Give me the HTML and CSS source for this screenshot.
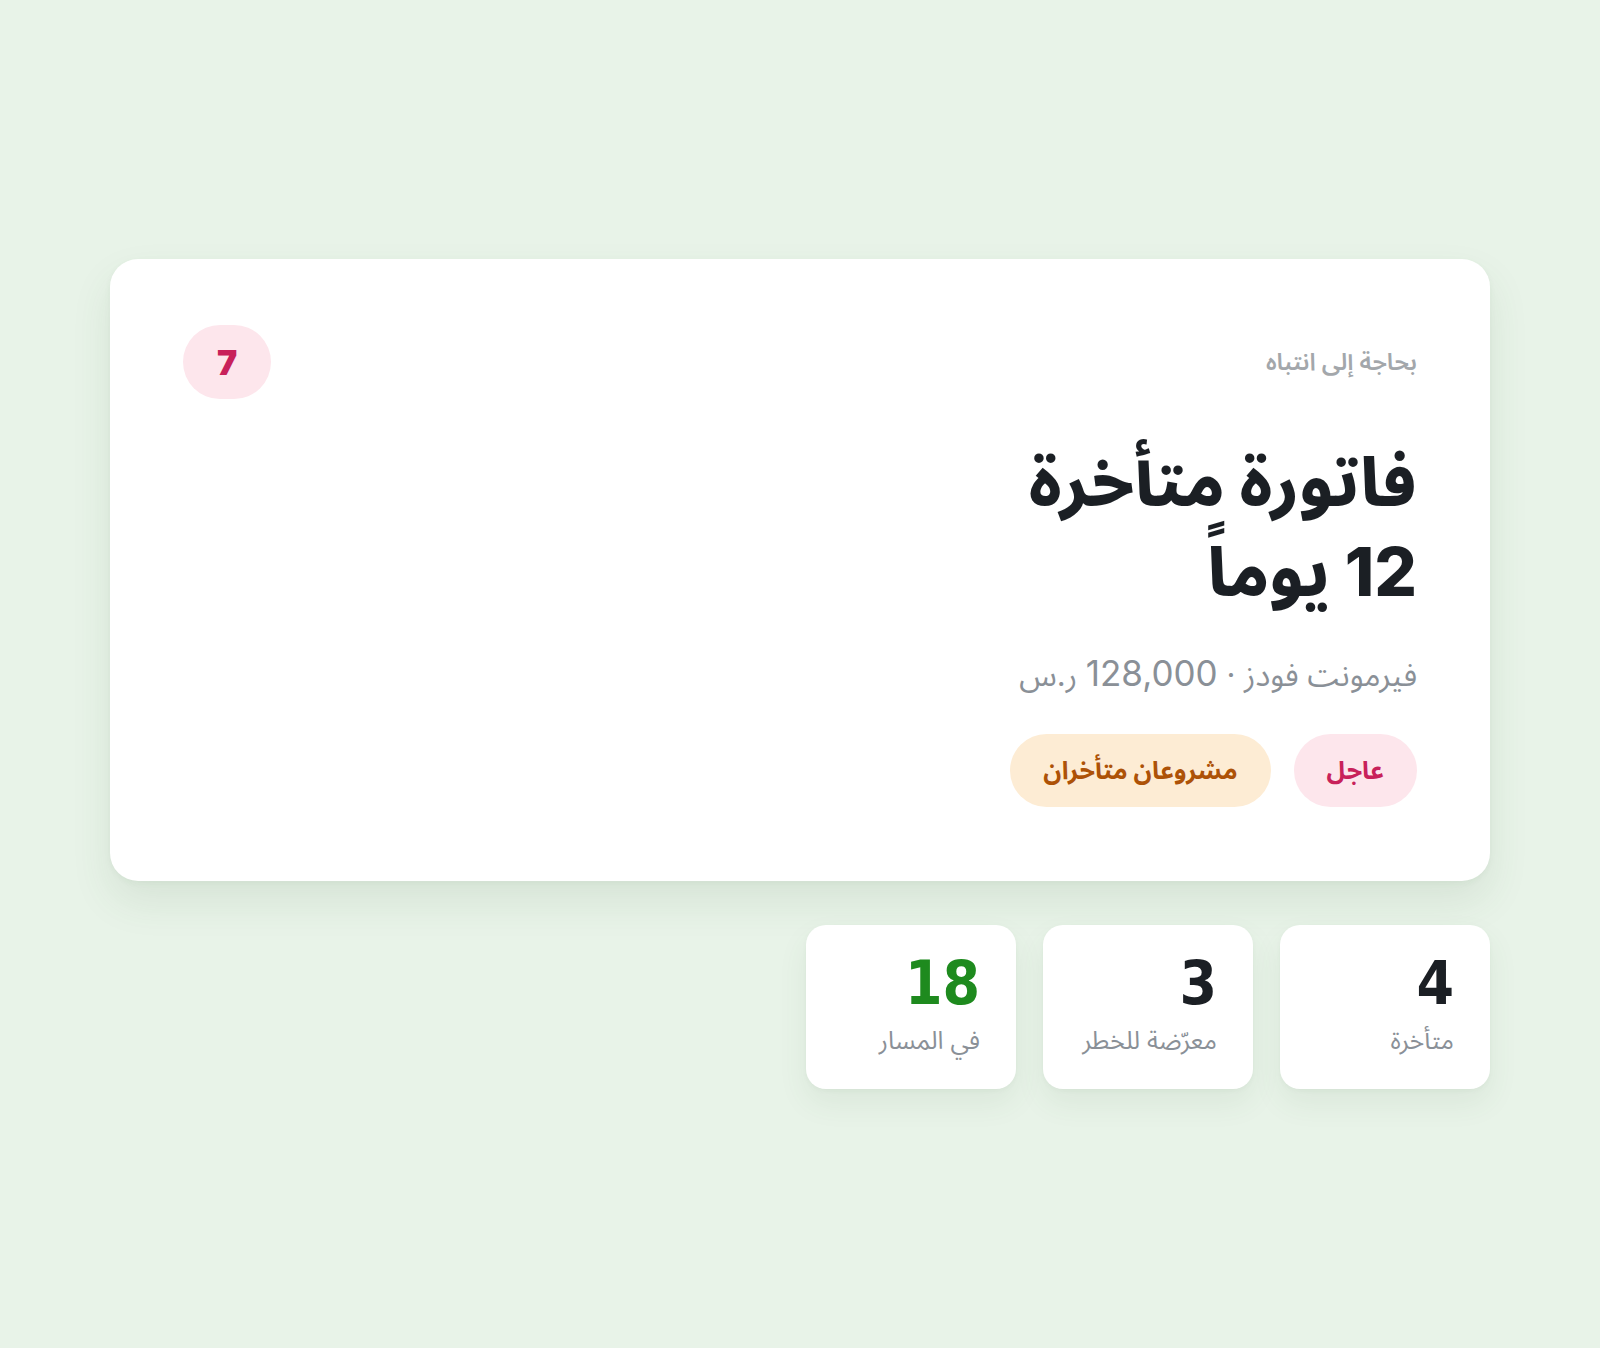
FILE: index.html
```html
<!DOCTYPE html>
<html lang="ar" dir="rtl">
<head>
<meta charset="utf-8">
<title>بحاجة إلى انتباه</title>
<link rel="stylesheet" href="styles.css">
</head>
<body>
<main class="wrap">
  <section class="card">
    <div class="card-head">
      <span class="eyebrow">بحاجة إلى انتباه</span>
      <span class="count">7</span>
    </div>
    <h1 class="title">فاتورة متأخرة<br>12 يوماً</h1>
    <p class="sub">فيرمونت فودز · <span class="amt">128,000</span> ر.س</p>
    <div class="tags">
      <span class="tag tag-red">عاجل</span>
      <span class="tag tag-amber">مشروعان متأخران</span>
    </div>
  </section>
  <section class="stats">
    <div class="stat">
      <div class="stat-num">4</div>
      <div class="stat-label">متأخرة</div>
    </div>
    <div class="stat">
      <div class="stat-num">3</div>
      <div class="stat-label">معرّضة للخطر</div>
    </div>
    <div class="stat">
      <div class="stat-num green">18</div>
      <div class="stat-label">في المسار</div>
    </div>
  </section>
</main>
</body>
</html>
```

FILE: styles.css
```css
* { box-sizing: border-box; }
html, body { margin: 0; padding: 0; }
body {
  background: #e8f3e8;
  font-family: "Inter", "Noto Sans Arabic", sans-serif;
  min-height: 1348px;
  display: flex;
  align-items: center;
  justify-content: center;
  color: #1b1f24;
}
.wrap {
  width: 1380px;
  display: flex;
  flex-direction: column;
  gap: 44px;
}
.card {
  background: #ffffff;
  border-radius: 28px;
  padding: 66px 73px 74px;
  box-shadow: 0 20px 40px rgba(60, 100, 60, 0.10), 0 2px 6px rgba(60, 100, 60, 0.05);
}
.card-head {
  display: flex;
  justify-content: space-between;
  align-items: center;
}
.eyebrow {
  font-size: 24px;
  font-weight: 600;
  color: #a3a7ab;
}
.count {
  min-width: 88px;
  height: 74px;
  border-radius: 37px;
  background: #fde6ec;
  color: #c8215a;
  font-weight: 900;
  font-size: 34px;
  display: flex;
  align-items: center;
  justify-content: center;
}
.title {
  margin: 38px 0 0;
  font-size: 67px;
  line-height: 90px;
  font-weight: 800;
  color: #1b1f24;
}
.sub {
  margin: 35px 0 0;
  font-size: 31px;
  line-height: 42px;
  color: #8a9097;
}
.amt {
  font-size: 35px;
  font-weight: 400;
}
.tags {
  margin-top: 38px;
  display: flex;
  gap: 23px;
}
.tag {
  height: 73px;
  padding: 0 33px;
  border-radius: 37px;
  display: flex;
  align-items: center;
  font-size: 25px;
  font-weight: 700;
}
.tag-red { background: #fde6ec; color: #c8215a; }
.tag-amber { background: #fdecd4; color: #ad5207; }
.stats {
  display: flex;
  gap: 27px;
}
.stat {
  width: 210px;
  height: 164px;
  background: #ffffff;
  border-radius: 20px;
  padding: 25px 36px 0;
  box-shadow: 0 14px 30px rgba(60, 100, 60, 0.08), 0 2px 5px rgba(60, 100, 60, 0.04);
}
.stat-num {
  font-family: "Liberation Sans Narrow", "DejaVu Sans Condensed", "Inter", sans-serif;
  font-size: 60px;
  line-height: 66px;
  font-weight: 700;
  color: #1b1f24;
}
.stat-num.green { color: #1e8a1e; }
.stat-label {
  margin-top: 6px;
  font-size: 25px;
  line-height: 36px;
  color: #8a9097;
  white-space: nowrap;
}
```
